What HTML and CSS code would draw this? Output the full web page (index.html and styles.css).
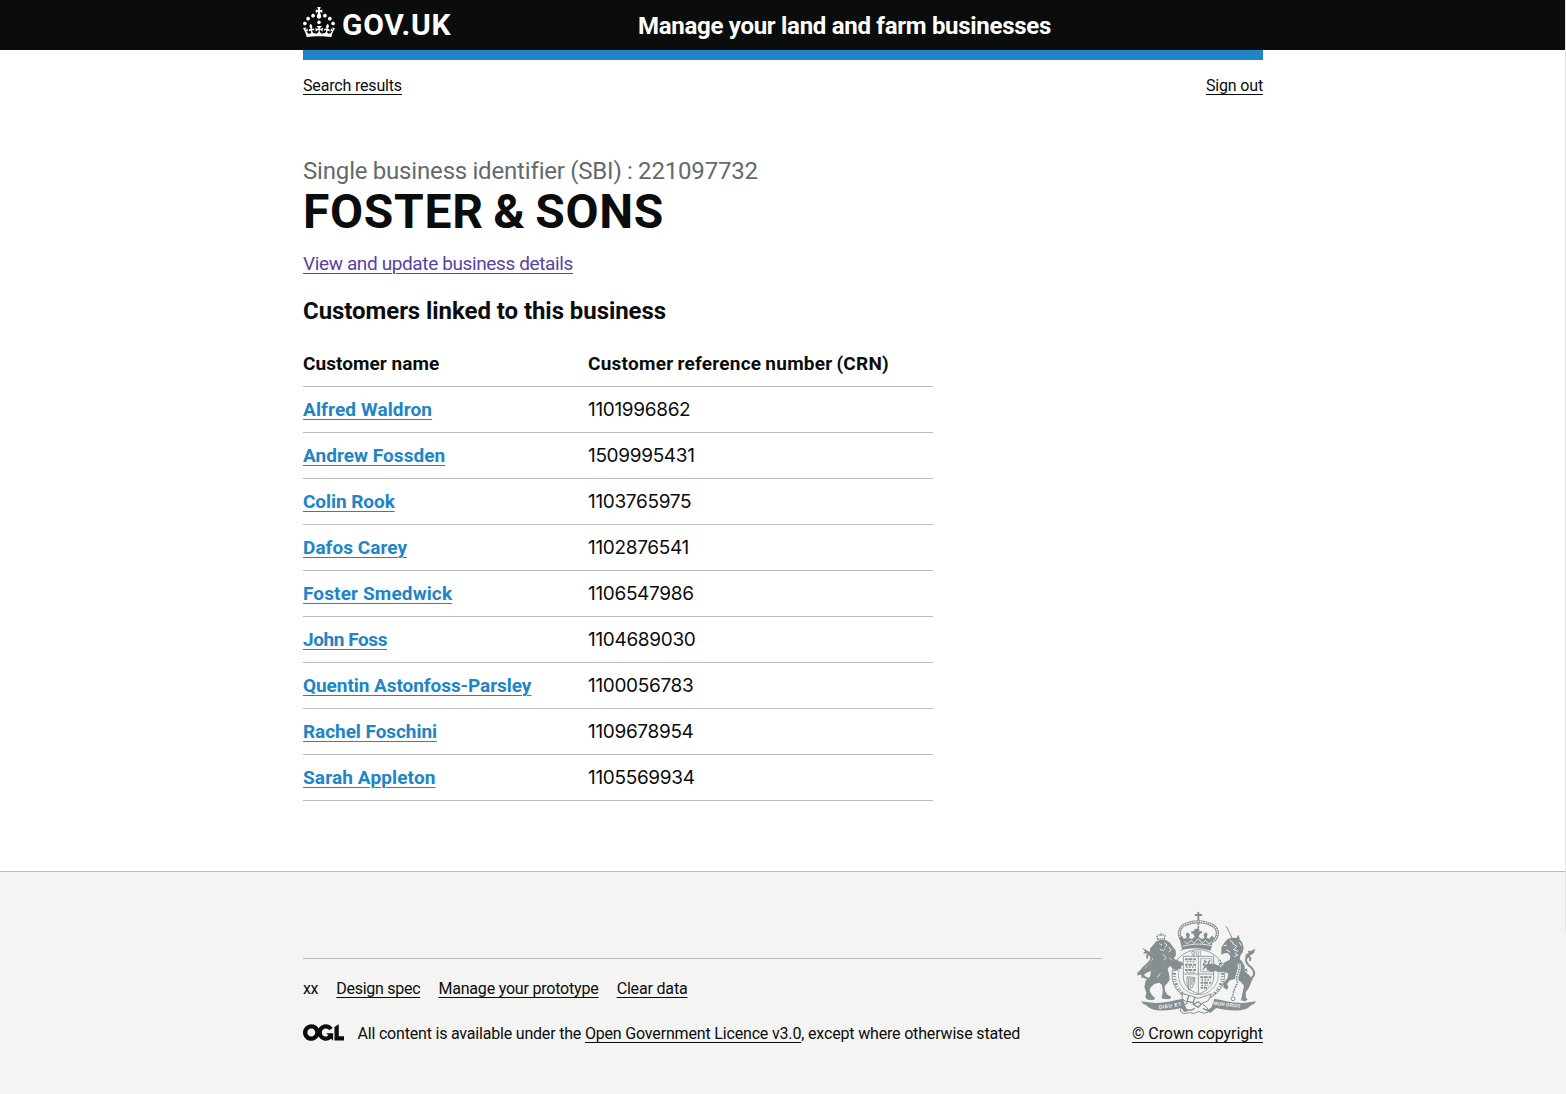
FILE: index.html
```html
<!DOCTYPE html>
<html lang="en">
<head>
<meta charset="utf-8">
<title>FOSTER &amp; SONS - Manage your land and farm businesses</title>
<link rel="stylesheet" href="styles.css">
</head>
<body>
<header class="header">
  <div class="container header-inner">
    <a class="logo" href="#">
      <svg class="crown" viewBox="0 0 32 30" width="32" height="30" aria-hidden="true"><path fill="currentColor" d="M22.6 10.4c-1 .4-2-.1-2.4-1-.4-.9.1-2 1-2.4.9-.4 2 .1 2.4 1s-.1 2-1 2.4m-5.9 6.7c-.9.4-2-.1-2.4-1-.4-.9.1-2 1-2.4.9-.4 2 .1 2.4 1s-.1 2-1 2.4m10.8-3.7c-1 .4-2-.1-2.4-1-.4-.9.1-2 1-2.4.9-.4 2 .1 2.4 1s0 2-1 2.4m3.3 4.8c-1 .4-2-.1-2.4-1-.4-.9.1-2 1-2.4.9-.4 2 .1 2.4 1s-.1 2-1 2.4M17 4.7l2.3 1.2V2.5l-2.3.7-.2-.2.9-3h-3.4l.9 3-.2.2c-.1.1-2.3-.7-2.3-.7v3.4L15 4.7c.1.1.1.2.2.2l-1.3 4c-.1.2-.1.4-.1.6 0 1.1.8 2 1.9 2.2h.7c1-.2 1.9-1.1 1.9-2.1 0-.2 0-.4-.1-.6l-1.3-4c-.1-.2 0-.2.1-.3m-7.6 5.7c.9.4 2-.1 2.4-1 .4-.9-.1-2-1-2.4-.9-.4-2 .1-2.4 1s0 2 1 2.4m-5 3c.9.4 2-.1 2.4-1 .4-.9-.1-2-1-2.4-.9-.4-2 .1-2.4 1s.1 2 1 2.4m-3.2 4.8c.9.4 2-.1 2.4-1 .4-.9-.1-2-1-2.4-.9-.4-2 .1-2.4 1s0 2 1 2.4m14.8 11c4.4 0 8.6.3 12.3.8 1.1-4.5 2.4-7 3.7-8.8l-2.5-.9c.2 1.3.3 1.9 0 2.7-.4-.4-.8-1.1-1.1-2.3l-1.2 4c.7-.5 1.3-.8 2-.9-1.1 2.5-2.6 3.1-3.5 3-1.1-.2-1.7-1.2-1.5-2.1.3-1.2 1.5-1.5 2.1-.1 1.1-2.3-.8-3-2-2.3 1.9-1.9 2.1-3.5.6-5.6-2.1 1.6-2.1 3.2-1.2 5.5-1.2-1.4-3.2-.6-2.5 1.6.9-1.4 2.1-.5 1.9.8-.2 1.1-1.7 2.1-3.5 1.9-2.7-.2-2.9-2.1-2.9-3.6.7-.1 1.9.5 2.9 1.9l.4-4.3c-1.1 1.1-2.1 1.4-3.2 1.4.4-1.2 2.1-3 2.1-3h-5.4s1.7 1.9 2.1 3c-1.1 0-2.1-.2-3.2-1.4l.4 4.3c1-1.4 2.2-2 2.9-1.9-.1 1.5-.2 3.4-2.9 3.6-1.9.2-3.4-.8-3.5-1.9-.2-1.3 1-2.2 1.9-.8.7-2.3-1.2-3-2.5-1.6.9-2.2.9-3.9-1.2-5.5-1.5 2-1.3 3.7.6 5.6-1.2-.7-3.1 0-2 2.3.6-1.4 1.8-1.1 2.1.1.2.9-.3 1.9-1.5 2.1-.9.2-2.4-.5-3.5-3 .6 0 1.2.3 2 .9l-1.2-4c-.3 1.1-.7 1.9-1.1 2.3-.3-.8-.2-1.4 0-2.7l-2.9.9C1.3 23 2.6 25.5 3.7 30c3.7-.5 7.9-.8 12.3-.8"/></svg>
      <span class="logo-text">GOV.UK</span>
    </a>
    <a class="service" href="#">Manage your land and farm businesses</a>
  </div>
</header>
<div class="container">
  <div class="brand-bar"></div>
  <nav class="topnav"><a href="#">Search results</a><a href="#">Sign out</a></nav>
  <main class="main">
    <h1 class="title"><span class="caption">Single business identifier (SBI) : 221097732</span><span class="name">FOSTER &amp; SONS</span></h1>
    <p class="details"><a href="#">View and update business details</a></p>
    <h2 class="subtitle">Customers linked to this business</h2>
    <table class="customers">
      <thead><tr><th>Customer name</th><th class="crn-head">Customer reference number (CRN)</th></tr></thead>
      <tbody>
        <tr><td><a class="t1" href="#">Alfred Waldron</a></td><td>1101996862</td></tr>
        <tr><td><a href="#">Andrew Fossden</a></td><td>1509995431</td></tr>
        <tr><td><a class="t3" href="#">Colin Rook</a></td><td>1103765975</td></tr>
        <tr><td><a href="#">Dafos Carey</a></td><td>1102876541</td></tr>
        <tr><td><a class="t1" href="#">Foster Smedwick</a></td><td>1106547986</td></tr>
        <tr><td><a class="t2" href="#">John Foss</a></td><td>1104689030</td></tr>
        <tr><td><a class="t3" href="#">Quentin Astonfoss-Parsley</a></td><td>1100056783</td></tr>
        <tr><td><a class="t3" href="#">Rachel Foschini</a></td><td>1109678954</td></tr>
        <tr><td><a class="t1" href="#">Sarah Appleton</a></td><td>1105569934</td></tr>
      </tbody>
    </table>
  </main>
</div>
<footer class="footer">
  <div class="container footer-inner">
    <div class="meta">
      <ul class="links"><li class="xx">xx</li><li><a class="spec" href="#">Design spec</a></li><li><a class="proto" href="#">Manage your prototype</a></li><li><a href="#">Clear data</a></li></ul>
      <div class="licence">
        <svg class="ogl" viewBox="0 0 483.2 195.7" width="41" height="17" aria-hidden="true"><path fill="currentColor" d="M421.5 142.8V.1l-50.7 32.3v161.1h112.4v-50.7zm-122.3-9.6A47.12 47.12 0 0 1 221 97.8c0-26 21.1-47.1 47.1-47.1 16.7 0 31.4 8.7 39.7 21.8l42.7-27.2A97.63 97.63 0 0 0 268.1 0c-36.5 0-68.3 20.1-85.1 49.7A98 98 0 0 0 97.8 0C43.9 0 0 43.9 0 97.8s43.9 97.8 97.8 97.8c36.5 0 68.3-20.1 85.1-49.7a97.76 97.76 0 0 0 149.6 25.4l19.4 22.2h3v-87.8h-80l24.3 27.5zM97.8 145c-26 0-47.1-21.1-47.1-47.1s21.1-47.1 47.1-47.1 47.1 21.1 47.1 47.1S123.8 145 97.8 145"/></svg>
        <p><span class="lic-a">All content is available under the </span><a href="#">Open Government Licence v3.0</a>, except where otherwise stated</p>
      </div>
    </div>
    <div class="copyright">
      <svg class="crest" viewBox="18 33 375 309" width="125" height="103" aria-hidden="true">
        <!-- imperial crown -->
        <g fill="none" stroke="#858f92" stroke-linecap="round">
          <path stroke-width="6" d="M205 38v28M197 45h17"/>
          <path stroke-width="9" d="M158 122c-16-14-12-38 5-47 14-7 28-10 42-10s28 3 43 11c17 9 19 33 3 46"/>
          <path stroke="#f4f4f2" stroke-width="4" stroke-dasharray="1 6" d="M158 122c-16-14-12-38 5-47 14-7 28-10 42-10s28 3 43 11c17 9 19 33 3 46"/>
          <path stroke-width="6" stroke-dasharray="1 7" d="M205 72v30"/>
        </g>
        <path fill="#858f92" d="M157 152l-9-40 8-5 5 9 9-2-3-12 6-5 7 7-3 10 9 3 8-7-4-9-6-1v-7l8 1 2-8h12l2 8 8-1v7l-6 1-4 9 8 7 9-3-3-10 7-7 6 5-3 12 9 2 5-9 8 5-10 40c-29-10-64-10-95 0z"/>
        <path fill="none" stroke="#f4f4f2" stroke-width="2.5" d="M158 139c30-9 64-9 94 0M164 124l8 8 11-11 9 9 13-14 12 14 10-9 10 11 9-8"/>
        <!-- garter -->
        <ellipse cx="205" cy="225" rx="79" ry="76" fill="#f4f4f2" stroke="#858f92" stroke-width="2.5"/>
        <path fill="none" stroke="#858f92" stroke-width="10" stroke-dasharray="2.5 5 6 4 2 6 3 3" d="M143 181c-14 26-14 62 3 88 8 10 16 17 24 21M267 181c14 26 14 62-3 88-8 10-16 17-24 21"/>
        <text class="motto" x="184" y="164">QUI</text>
        <ellipse cx="205" cy="226" rx="60" ry="58" fill="#f4f4f2" stroke="#858f92" stroke-width="2"/>
        <!-- shield -->
        <path fill="#f4f4f2" stroke="#858f92" stroke-width="2.5" d="M160 169h91v62c0 26-23 43-45 51-24-8-46-25-46-51zM205 169v112M160 222h91"/>
        <g fill="none" stroke="#858f92" stroke-width="6">
          <path d="M165 178h34M165 194h34M165 210h34M211 232h35M212 248h31M212 263h19" stroke-dasharray="8 2 12 3"/>
          <path d="M170 185h27M168 201h29M170 217h26M214 240h28M214 256h21" stroke-width="4" stroke-dasharray="5 4"/>
        </g>
        <path fill="none" stroke="#858f92" stroke-width="2" d="M212 176h34v39h-34z"/>
        <path fill="none" stroke="#858f92" stroke-width="4" d="M219 210l5-9 8 0 6 8M224 200l-3-9 7-6-6-4M232 201l6-8-3-7 6-5M218 194l11 2 8-6"/>
        <path fill="none" stroke="#858f92" stroke-width="2.5" d="M171 230l24 3c-2 20-7 31-18 38M171 230c-1 16 0 30 6 41M176 233v34M181 233v31M186 234v22M191 234v12"/>
        <!-- lion -->
        <path fill="none" stroke="#858f92" stroke-width="4" d="M83 118l-2-9 6-5 6 2 6-2 6 3-2 10zM93 105v-6" stroke-dasharray="5 2"/>
        <path fill="#858f92" d="M79 124l13-5 15 1 13 8 9 13 8 10 1 15-6 9 8 7 15 4 6 9-9 2 3 9-10 0-3 7-12-6-11-9-6 9 4 14 2 18-7 11-8 8 1 14 7 12 12 6-4 7-18 0-8-4 3-8 1-16-2-14-8-7-15 4-12 11-2 10 7 13 9 7-3 7-19-1-7-7 3-14-6-17 4-19 13-12 3-17-13 5-12 9-10-3-6 3 0-9 9-8 14-6 14-14 10-13-5-9 3-8-7-4 0-10z"/>
        <path fill="none" stroke="#f4f4f2" stroke-width="2.5" d="M88 131l8 4M103 128l8 7-6 8M90 148l10 4 5-5M116 141l8 9-9 7M99 163l9 9-6 9M118 173l8 8M82 231l9-11"/>
        <path fill="none" stroke="#858f92" stroke-width="6" d="M60 238c-20-4-31-19-23-31 7-11 23-17 26-29 3-10-1-15-7-14s-7 8-2 11"/>
        <path fill="#858f92" d="M36 143l17 9 14 7-2 13-11-10-15-2 6-6zM61 163l10 6-7 13zM37 222l-3 13 12-4z"/>
        <!-- unicorn -->
        <path fill="none" stroke="#858f92" stroke-width="3" d="M289 79l17 35"/>
        <path fill="#858f92" d="M274 142l9-14 10-11 14-4 12 1 7-10 3 14 8 10 4 15-3 14-7 10-2 10 8 8 7 14 0 14 16 15 5 15-8 20-10 14 1 16 5 6-9 5-11-3 2-10 4-18 3-16-10-12-18-8-14 4-9 10 4 11-4 7-11-7 0-12 12-15 3-14-12-6-15 2-12-4-12 4-7-5-8-3 3-8-6-5 10-5 20 2 12 4 13-9 18-9 2-10-8-10-10 1-9 4z"/>
        <path fill="none" stroke="#f4f4f2" stroke-width="3" d="M281 138l9-3M300 121l11 8M307 130l13 9-7 8M309 148l15 6M314 158l9 7-10 5M328 127l6 10M289 149l12 8M281 192l-11 8"/>
        <path fill="none" stroke="#858f92" stroke-width="6" d="M351 240c18-5 25-15 20-27-5-13-24-19-23-33 0-8 6-12 11-8 4 3 2 9-2 9"/>
        <path fill="#858f92" d="M376 146l-4 13-12 8-14 12 1-15 9-6-3-6 9 1zM350 205l-9 6 12 4zM366 230l3 12-11-6z"/>
        <path fill="none" stroke="#f4f4f2" stroke-width="9" d="M326 190c10 20-10 31-5 49 5 14-10 22-12 47"/>
        <path fill="none" stroke="#858f92" stroke-width="5" stroke-dasharray="5 3" d="M326 190c10 20-10 31-5 49 5 14-10 22-12 47"/>
        <circle cx="309" cy="296" r="6" fill="none" stroke="#858f92" stroke-width="3"/>
        <!-- base and motto ribbon -->
        <path fill="#f4f4f2" stroke="#858f92" stroke-width="3" d="M157 281l20 5 28 9 27-9 12-4-9 20-19 8 16 14 4 12-15 4-14-6-13 6-15-2-17 3-12-8 6-14 16-10-16-14z"/>
        <path fill="none" stroke="#858f92" stroke-width="4" d="M177 286l-6 18 18 4 6-16M190 313l14-8 10 7-10 10zM168 330h16l10-5M245 330h-16l-10-5"/>
        <path fill="#858f92" d="M33 304l34 4 10 1c30-1 56-8 82-13l8 25 7 13-12 2-8-12c-24 6-48 9-74 7-16-2-26-10-33-17l-6-1zM379 304l-34 4-10 1c-30-1-56-8-82-13l-8 25-15 13 12 4 16-14c24 6 48 9 74 7 16-2 26-10 33-17l6-1z"/>
        <text class="motto light" transform="translate(87 327) rotate(-8)" textLength="68">DIEU ET</text>
        <text class="motto light" transform="translate(250 314) rotate(7)" textLength="82" lengthAdjust="spacingAndGlyphs">MON DROIT</text>
      </svg>
      <a href="#">© Crown copyright</a>
    </div>
  </div>
</footer>
<div class="window-edge"></div>
</body>
</html>
```
FILE: styles.css
```css
* { box-sizing: border-box; }
body {
  margin: 0;
  min-height: 1094px;
  display: flex;
  flex-direction: column;
  position: relative;
  background: #fff;
  color: #0b0c0c;
  font: 16px/20px Roboto, "Liberation Sans", sans-serif;
  letter-spacing: -0.17px;
}
h1, h2, p, ul { margin: 0; padding: 0; font-weight: 400; }
a { color: inherit; text-decoration: underline; text-decoration-thickness: 1px; text-underline-offset: 3px; }
.container { width: 960px; margin: 0 auto; }

.header { height: 50px; background: #0b0c0c; color: #fff; }
.header-inner { height: 50px; display: flex; }
.header a { text-decoration: none; }
.logo { width: 335px; display: flex; gap: 7px; padding-top: 7px; }
.crown { display: block; }
.logo-text { font-weight: 700; font-size: 30px; line-height: 35px; letter-spacing: 0.75px; }
.service { font-weight: 700; font-size: 24px; line-height: 52px; letter-spacing: -0.286px; white-space: nowrap; }

.brand-bar { height: 10px; background: #2084c6; }
.topnav { display: flex; justify-content: space-between; padding-top: 16px; }

.main { padding-top: 60px; width: 630px; }
.title { display: flex; flex-direction: column; white-space: nowrap; }
.caption { font-size: 24px; line-height: 30px; color: #626a6e; letter-spacing: -0.17px; word-spacing: -0.4px; }
.name { font-weight: 700; font-size: 48px; line-height: 52px; letter-spacing: 0.7px; word-spacing: -3px; }
.details { margin-top: 13px; font-size: 19px; line-height: 25px; letter-spacing: -0.378px; color: #5a429e; }
.subtitle { margin-top: 20px; font-weight: 700; font-size: 24px; line-height: 30px; letter-spacing: -0.062px; }

.customers { margin-top: 15px; width: 100%; border-spacing: 0; table-layout: fixed; font-size: 19px; line-height: 25px; letter-spacing: 0.04px; }
.customers th, .customers td { height: 46px; padding: 10px 0; border-bottom: 1px solid #b9bbbc; text-align: left; }
.customers th:first-child { width: 285px; }
.customers .crn-head { letter-spacing: 0.25px; word-spacing: -1px; }
.customers a { font-weight: 700; color: #2084c6; }
.customers td + td { font-family: Inter, sans-serif; letter-spacing: -0.33px; }
.t1 { letter-spacing: 0.13px; }
.t2 { letter-spacing: -0.425px; }
.t3 { letter-spacing: -0.06px; }

.footer { flex: 1; margin-top: 70px; border-top: 1px solid #b9bbbc; background: #f4f4f2; }
.footer-inner { display: flex; justify-content: space-between; padding-top: 40px; }
.meta { width: 799px; margin-top: 46px; border-top: 1px solid #b9bbbc; padding-top: 20px; }
.links { display: flex; gap: 18.2px; list-style: none; }
.xx { letter-spacing: -0.4px; }
.spec { letter-spacing: -0.275px; }
.proto { letter-spacing: -0.204px; }
.licence { display: flex; gap: 13.5px; margin-top: 25px; }
.ogl { display: block; }
.lic-a { letter-spacing: -0.195px; }
.copyright { display: flex; flex-direction: column; align-items: flex-end; width: 131px; letter-spacing: -0.087px; white-space: nowrap; }
.crest { display: block; margin: -1px 2px 10px 0; }
.motto { font: 700 14px "Liberation Sans", sans-serif; letter-spacing: 2px; fill: #858f92; }
.motto.light { font-size: 15px; letter-spacing: 0; fill: #f4f4f2; }

.window-edge { position: absolute; top: 0; right: 0; width: 1px; height: 933px; background: #e4e5e6; }
```
